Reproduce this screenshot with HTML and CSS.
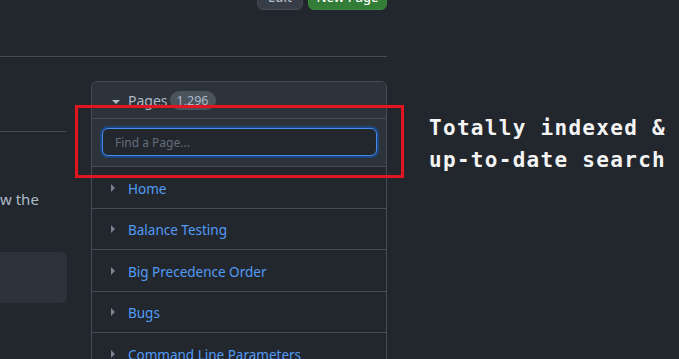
FILE: index.html
```html
<!DOCTYPE html>
<html lang="en">
<head>
    <meta charset="UTF-8">
    <meta name="viewport" content="width=device-width, initial-scale=1.0">
    <title>Wiki Pages</title>
    <link rel="stylesheet" href="styles.css">
</head>
<body>
    <div class="page">
        <div class="main">
            <!-- Page actions -->
            <div class="actions">
                <a class="btn btn-edit">Edit</a>
                <a class="btn btn-primary">New Page</a>
            </div>
            <hr class="rule">

            <div class="columns">
                <!-- Article (cropped) -->
                <div class="article">
                    <div class="article-head"></div>
                    <p class="article-text">w the</p>
                    <div class="article-box"></div>
                </div>

                <!-- Pages sidebar -->
                <div class="sidebar">
                    <div class="sidebar-head">
                        <span class="caret-down"></span>
                        <span class="sidebar-title">Pages</span>
                        <span class="counter">1,296</span>
                    </div>
                    <div class="sidebar-search">
                        <input type="text" class="search-input" placeholder="Find a Page...">
                    </div>
                    <ul class="page-list">
                        <li><span class="caret-right"></span><a>Home</a></li>
                        <li><span class="caret-right"></span><a>Balance Testing</a></li>
                        <li><span class="caret-right"></span><a>Big Precedence Order</a></li>
                        <li><span class="caret-right"></span><a>Bugs</a></li>
                        <li><span class="caret-right"></span><a>Command Line Parameters</a></li>
                    </ul>
                </div>
            </div>
        </div>

        <!-- Annotation -->
        <div class="note">Totally indexed &amp;<br>up-to-date search</div>
        <div class="highlight"></div>
    </div>
</body>
</html>
```

FILE: styles.css
```css
body {
    margin: 0;
    background: #22272e;
    font-family: "Noto Sans", "Open Sans", sans-serif;
    color: #adbac7;
    overflow: hidden;
}
.page {
    position: relative;
    display: flex;
    align-items: flex-start;
    height: 359px;
    overflow: hidden;
}
.main {
    width: 387px;
}
.actions {
    display: flex;
    justify-content: flex-end;
    gap: 5px;
    margin-top: -22px;
    height: 32px;
}
.btn {
    box-sizing: border-box;
    height: 32px;
    text-align: center;
    line-height: 36px;
    font-size: 13px;
    font-weight: 500;
    border-radius: 6px;
    border: 1px solid #444c56;
    background: #373e47;
    color: #adbac7;
    overflow: hidden;
}
.btn-edit {
    width: 46px;
}
.btn-primary {
    width: 79px;
    background: #347d39;
    border-color: #3b8640;
    color: #ffffff;
}
.rule {
    margin: 46px 0 0;
    border: 0;
    border-top: 1px solid #444c56;
}
.columns {
    display: flex;
    gap: 24px;
    margin-top: 24px;
}
.article {
    width: 67px;
    flex: none;
}
.article-head {
    height: 50px;
    border-bottom: 1px solid #444c56;
    margin-right: 1px;
}
.article-text {
    margin: 57px 0 0;
    font-size: 15px;
    line-height: 20px;
}
.article-box {
    margin-top: 43px;
    height: 51px;
    background: #2d333b;
    border-radius: 0 6px 6px 0;
}
.sidebar {
    width: 296px;
    flex: none;
    box-sizing: border-box;
    border: 1px solid #444c56;
    border-radius: 6px;
    overflow: hidden;
    height: 300px;
}
.sidebar-head {
    display: flex;
    align-items: center;
    height: 36px;
    padding: 0 0 0 20px;
    background: #2d333b;
    border-bottom: 1px solid #444c56;
}
.caret-down {
    width: 0;
    height: 0;
    border-left: 4px solid transparent;
    border-right: 4px solid transparent;
    border-top: 4px solid #adbac7;
    margin-right: 8px;
    margin-top: 3px;
}
.sidebar-title {
    font-size: 14px;
    color: #adbac7;
}
.counter {
    margin-left: 2px;
    padding: 0 7px;
    height: 19px;
    line-height: 19px;
    border-radius: 10px;
    background: #4b535d;
    color: #adbac7;
    font-size: 12.5px;
}
.sidebar-search {
    padding: 9px 9px 10px 10px;
    background: #2d333b;
    border-bottom: 1px solid #444c56;
}
.search-input {
    box-sizing: border-box;
    display: block;
    width: 100%;
    height: 28px;
    padding: 0 12px;
    background: #22272e;
    border: 1px solid #478be6;
    border-radius: 6px;
    box-shadow: 0 0 0 2px #1d4680;
    outline: none;
    color: #adbac7;
    font-family: "Noto Sans", sans-serif;
    font-size: 12px;
}
.search-input::placeholder {
    color: #636e7b;
}
.page-list {
    list-style-type: none;
    margin: 0;
    padding: 0;
}
.page-list li {
    display: flex;
    align-items: center;
    height: 37.5px;
    padding: 3px 0 0 19px;
    border-bottom: 1px solid #444c56;
}
.caret-right {
    width: 0;
    height: 0;
    border-top: 4px solid transparent;
    border-bottom: 4px solid transparent;
    border-left: 4px solid #768390;
    margin-right: 13px;
    margin-top: -2px;
}
.page-list a {
    color: #539bf5;
    font-size: 13.5px;
}
.note {
    margin: 112px 0 0 42px;
    font-family: "DejaVu Sans Mono", monospace;
    font-weight: bold;
    font-size: 21px;
    letter-spacing: 1.3px;
    line-height: 32px;
    color: #f4f4f4;
    white-space: nowrap;
}
.highlight {
    position: absolute;
    left: 75px;
    top: 105px;
    width: 323px;
    height: 67px;
    border: 3px solid #e3161f;
}
```
